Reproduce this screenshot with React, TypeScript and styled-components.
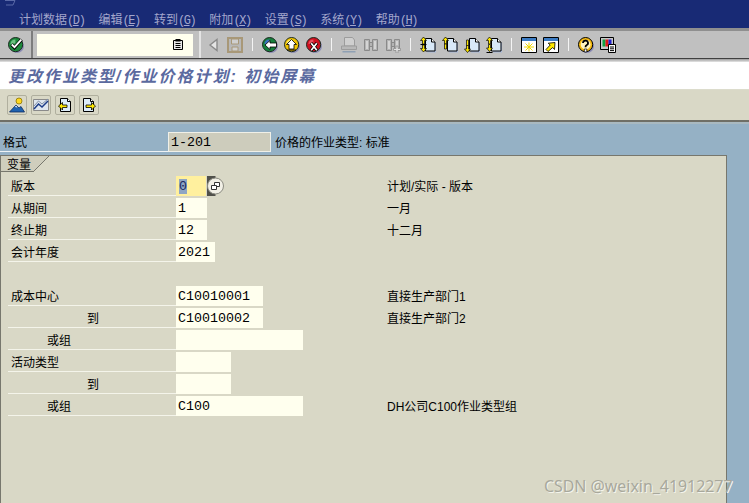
import React from "react";
import styled, { createGlobalStyle } from "styled-components";

const CJK = `"Liberation Sans", "Noto Sans CJK SC", sans-serif`;
const MONO = `"Liberation Mono", "Noto Sans CJK SC", monospace`;

const Global = createGlobalStyle`
  html, body { margin: 0; padding: 0; background: #95b1c5; }
  body { width: 749px; height: 503px; overflow: hidden; font: 12px ${CJK}; color: #000; }
`;

const Page = styled.div`
  position: relative;
  width: 749px;
  height: 503px;
  overflow: hidden;
  display: flex;
  flex-direction: column;
`;

const MenuBar = styled.div`
  height: 28px;
  box-sizing: border-box;
  background: #182a75;
  display: flex;
  gap: 14px;
  padding: 12px 0 0 19px;
  position: relative;
  color: #a3a6cc;
  font-size: 12px;
  line-height: 16px;
`;
const MenuItem = styled.span`
  white-space: nowrap;
`;
const Hotkey = styled.span`
  font-family: ${MONO};
  letter-spacing: -1.4px;
  & u { text-underline-offset: 1px; }
`;
const CornerMark = styled.svg`
  position: absolute;
  left: 4px;
  top: 0;
`;

const Toolbar = styled.div`
  height: 31px;
  box-sizing: border-box;
  background: #c0c0c0;
  border-top: 3px solid #8f8f8f;
  border-bottom: 1px solid #404040;
  display: flex;
  align-items: center;
`;
const OkCell = styled.div`
  width: 33px;
  height: 100%;
  box-sizing: border-box;
  border-right: 2px solid #7d7d7d;
  padding-left: 8px;
  display: flex;
  align-items: center;
`;
const CommandField = styled.div`
  width: 156px;
  height: 22px;
  margin: 0 6px 0 4px;
  background: #ffffee;
  display: flex;
  align-items: center;
  justify-content: flex-end;
  padding-right: 5px;
  box-sizing: border-box;
`;
const CellEdge = styled.div`
  width: 2px;
  height: 100%;
  background: #e4e4e4;
  margin-right: 4px;
`;
const Tools = styled.div`
  display: flex;
  align-items: center;
  gap: 6px;
`;
const Sep = styled.div`
  width: 1px;
  height: 13px;
  margin: 0 3px;
  background: #f4f4f4;
`;
const Shade = styled.div`
  height: 3px;
  background: linear-gradient(#9a9a9a, #e6e6e6);
`;

const TitleBar = styled.div`
  height: 27px;
  box-sizing: border-box;
  background: #fff;
  padding: 0 0 2px 8px;
  display: flex;
  align-items: center;
`;
const TitleRule = styled.div`
  height: 1px;
  background: #dcdccc;
`;
const Title = styled.div`
  font: italic bold 16px ${CJK};
  letter-spacing: 2px;
  color: #5b6a9f;
  white-space: nowrap;
`;

const AppBar = styled.div`
  height: 30px;
  box-sizing: border-box;
  background: #d9d8c6;
  display: flex;
  align-items: center;
  gap: 4px;
  padding: 0 0 0 7px;
`;
const AppButton = styled.div`
  width: 20px;
  height: 20px;
  box-sizing: border-box;
  border: 1px solid #b0af9e;
  border-radius: 2px;
  background: #d9d8c6;
  display: flex;
  align-items: center;
  justify-content: center;
`;

const Blue = styled.div`
  flex: 1;
  background: #95b1c5;
  border-top: 2px solid #6f6f66;
  display: flex;
  flex-direction: column;
  min-height: 0;
`;
const Fade = styled.div`
  height: 2px;
  background: #a9b9c0;
`;
const HeaderRow = styled.div`
  height: 31px;
  display: flex;
  align-items: flex-end;
  flex: none;
`;
const HeaderLabel = styled.div`
  width: 168px;
  box-sizing: border-box;
  padding-left: 3px;
  height: 20px;
  line-height: 22px;
  border-bottom: 1px solid #eef2f4;
  margin-bottom: 3px;
`;
const HeaderValue = styled.div`
  width: 103px;
  height: 20px;
  box-sizing: border-box;
  margin-bottom: 3px;
  background: #cdccbc;
  border: 1px solid #f0f0e8;
  font: 13.33px/20px ${MONO};
  padding-left: 2px;
`;
const HeaderText = styled.div`
  margin: 0 0 3px 4px;
  height: 20px;
  line-height: 22px;
  white-space: nowrap;
`;

const Panel = styled.div`
  flex: 1;
  width: 727px;
  box-sizing: border-box;
  background: #d9d8c6;
  border-top: 1px solid #77776d;
  border-left: 1px solid #77776d;
  border-right: 1px solid #77776d;
  min-height: 0;
`;
const TabStrip = styled.div`
  height: 16px;
  display: flex;
  margin-bottom: 2px;
`;
const Tab = styled.div`
  width: 32px;
  height: 16px;
  box-sizing: border-box;
  background: #cfcebd;
  border-bottom: 1px solid #77776d;
  padding-left: 6px;
  line-height: 18px;
`;
const TabSlant = styled.svg`
  display: block;
`;
const FormRows = styled.div`
  display: flex;
  flex-direction: column;
  padding-left: 7px;
`;
const Row = styled.div`
  height: 22px;
  display: flex;
  align-items: flex-end;
`;
const Label = styled.div<{ $indent: number }>`
  width: 168px;
  height: 21px;
  box-sizing: border-box;
  border-bottom: 1px solid #f4f4ea;
  padding-left: ${(p) => p.$indent}px;
  line-height: 25px;
  white-space: nowrap;
`;
const FieldCell = styled.div`
  width: 211px;
  height: 100%;
  display: flex;
  align-items: flex-end;
`;
const Field = styled.div<{ $width: number; $focus?: boolean }>`
  width: ${(p) => p.$width}px;
  height: 20px;
  box-sizing: border-box;
  padding-left: ${(p) => (p.$focus ? 3 : 2)}px;
  background: ${(p) => (p.$focus ? "#fff09e" : "#ffffee")};
  font: 13.33px/21px ${MONO};
`;
const Selected = styled.span`
  background: #8fa6c4;
  color: #1a2a60;
`;
const PickerButton = styled.svg`
  display: block;
  margin-left: 1px;
`;
const Description = styled.div`
  line-height: 25px;
  height: 21px;
  white-space: nowrap;
`;
const Watermark = styled.div`
  position: absolute;
  left: 544px;
  top: 475px;
  font: 15.9px "Noto Sans", "DejaVu Sans", sans-serif;
  color: #a8a89c;
  text-shadow: 1px 1px 0 #f4f4ec;
  white-space: nowrap;
`;

const Ico = ({ children }: { children: React.ReactNode }) => (
  <svg width="16" height="16" viewBox="0 0 16 16" style={{ display: "block", flex: "none" }}>
    {children}
  </svg>
);

const Ball = ({ fill, hi }: { fill: string; hi: string }) => (
  <>
    <circle cx="9" cy="9" r="7" fill="#8c8cb4" />
    <circle cx="7.6" cy="7.6" r="7.1" fill={fill} stroke="#1c2a20" strokeWidth="1" />
    <path d="M2.4 7a5 5 0 0 1 5-4.6v4z" fill={hi} />
  </>
);

const Page1 = () => (
  <>
    <path d="M7 3h5.500l3.500 3v9.500H7z" fill="#a8b8d8" />
    <path d="M5.500 1.500h6l3.500 3.500v9H5.500z" fill="#d8e8f8" stroke="#000" strokeWidth="1" />
    <path d="M11.500 1.500v3.500H15" fill="#fff" stroke="#000" strokeWidth="1" />
  </>
);
const UpArrow = ({ x, y }: { x: number; y: number }) => (
  <path transform={`translate(${x} ${y})`} d="M3 0l3 3.500H4V7H2V3.500H0z" fill="#ffe800" stroke="#000" strokeWidth=".7" />
);
const DownArrow = ({ x, y }: { x: number; y: number }) => (
  <path transform={`translate(${x} ${y})`} d="M3 7l3-3.500H4V0H2v3.500H0z" fill="#ffe800" stroke="#000" strokeWidth=".7" />
);
const Gray = "#9c9c9c";

const Binocular = () => (
  <>
    <path d="M1.500 2.500h5v11h-5zM9.500 2.500h5v11h-5zM6.500 5.500h3v4h-3z" fill="#b4b4b4" stroke="#8a8a8a" />
    <path d="M3 4h2v8H3zM11 4h2v8h-2z" fill="#d4d4d4" />
  </>
);

const icons: Record<string, React.ReactNode> = {
  ok: (
    <>
      <Ball fill="#1c8a3c" hi="#6cc080" />
      <path d="M3.500 7.500l3 3 7-8" fill="none" stroke="#000" strokeWidth="3.400" />
      <path d="M3.800 7.500l2.700 2.700 6.800-7.600" fill="none" stroke="#fff" strokeWidth="1.800" />
    </>
  ),
  back: (
    <>
      <Ball fill="#16803c" hi="#3a70c0" />
      <path d="M3 8l5-4.500V6h6.500v4H8v2.500z" fill="#fff" stroke="#000" strokeWidth=".8" />
    </>
  ),
  up: (
    <>
      <Ball fill="#f2c400" hi="#fff070" />
      <path d="M7.500 2.500l5 5H10v4.500H5V7.500H2.500z" fill="#fff" stroke="#000" strokeWidth=".8" />
      <path d="M3 13h9" stroke="#000" strokeWidth="1" />
    </>
  ),
  cancel: (
    <>
      <Ball fill="#d01020" hi="#e85060" />
      <path d="M5 6l6 7.500M11 6l-6 7.500" stroke="#000" strokeWidth="3.200" />
      <path d="M5.200 6.200l5.600 7M10.800 6.200l-5.600 7" stroke="#fff" strokeWidth="1.700" />
    </>
  ),
  prev: <path d="M12 2.500v11l-7-5.500z" fill="#e4e4e4" stroke="#8a8a8a" strokeWidth="1.400" />,
  save: (
    <>
      <path d="M1 1h14v14H1z" fill="#b8b8b8" stroke="#a89878" strokeWidth="2" />
      <path d="M4.500 2h7v5h-7zM5 10h6v4H5z" fill="#cfcfcf" stroke="#a89878" />
    </>
  ),
  print: (
    <>
      <path d="M3.500 .5h8l2 2.500v6H3.500z" fill="#cfcfcf" stroke={Gray} />
      <path d="M.5 9h15v3.500H.5z" fill="#b8b8b8" stroke={Gray} />
      <path d="M1.500 14h13v1.500h-13z" fill="#8fa0b4" />
    </>
  ),
  find: <Binocular />,
  findNext: (
    <>
      <Binocular />
      <path d="M11 9h2v2.500h2.500v2H13V16h-2v-2.500H8.500v-2H11z" fill="#e0e0e0" stroke="#8a8a8a" strokeWidth=".7" />
    </>
  ),
  first: (
    <>
      <Page1 />
      <UpArrow x={.5} y={0} />
      <DownArrow x={.5} y={8} />
      <path d="M.5 7.500h6" stroke="#000" />
    </>
  ),
  pgUp: (
    <>
      <Page1 />
      <UpArrow x={.5} y={0} />
      <path d="M2.500 7h2v5h-2z" fill="#ffe800" stroke="#000" strokeWidth=".7" />
    </>
  ),
  pgDown: (
    <>
      <Page1 />
      <path d="M2.500 3h2v6h-2z" fill="#ffe800" stroke="#000" strokeWidth=".7" />
      <DownArrow x={.5} y={8.500} />
    </>
  ),
  last: (
    <>
      <Page1 />
      <UpArrow x={.5} y={0} />
      <DownArrow x={.5} y={7.500} />
      <path d="M.5 15.500h6" stroke="#000" />
    </>
  ),
  newWin: (
    <>
      <path d="M.5.500h15v15H.5z" fill="#fff" stroke="#000" />
      <path d="M1 1h14v3H1z" fill="#3c7cc4" />
      <path d="M8 5.500v9M3 10h10M4.500 6.500l7 7M11.500 6.500l-7 7" stroke="#f0d800" strokeWidth="1" />
    </>
  ),
  shortcut: (
    <>
      <path d="M.5.500h15v15H.5z" fill="#fff" stroke="#000" />
      <path d="M1 1h14v3H1z" fill="#3c7cc4" />
      <path d="M12 5.500l-.5 7-1.800-2-4.700 4-2-2 4.200-4.500-2-1.800z" fill="#ffe800" stroke="#000" strokeWidth=".8" />
    </>
  ),
  help: (
    <>
      <circle cx="9" cy="9" r="7" fill="#8c8cb4" />
      <circle cx="7.600" cy="7.600" r="7.100" fill="#f8bc10" stroke="#000" />
      <circle cx="7.600" cy="7.600" r="4.900" fill="#fff4c0" />
      <path d="M5 6a2.500 2.500 0 1 1 3.500 2.300q-1 .5-1 2" fill="none" stroke="#000" strokeWidth="1.800" />
      <path d="M6.300 12h2.500v3H6.300z" fill="#fff" stroke="#000" strokeWidth=".7" />
    </>
  ),
  layout: (
    <>
      <path d="M.5.500h13v12H.5z" fill="#c8c8c8" stroke="#000" />
      <path d="M2.500 2.500h3v7h-3z" fill="#10a040" />
      <path d="M5.500 2.500h3v7h-3z" fill="#e01818" />
      <path d="M8.500 2.500h3v7h-3z" fill="#2020d0" />
      <path d="M8.500 7.500h7v8h-7z" fill="#fff" stroke="#000" />
      <path d="M10 10h4M10 11.800h4M10 13.600h4" stroke="#000" />
    </>
  ),
  person: (
    <>
      <circle cx="10" cy="4" r="3" fill="#ffd820" stroke="#8a7400" strokeWidth=".8" />
      <path d="M.5 15L7 8l3 3 2-1.500L15.500 15z" fill="#1f62b0" stroke="#0c2c60" strokeWidth=".8" />
      <path d="M6 10l1-1.500 1.500 2z" fill="#fff" />
    </>
  ),
  chart: (
    <>
      <path d="M.5 2.500h15v11H.5z" fill="#dfe6ee" stroke="#8a8a8a" />
      <path d="M1 12l4.500-5 3.500 3 6-6" fill="none" stroke="#1c3c88" strokeWidth="1.500" />
      <path d="M1 9l4.500-5 3.500 3 6-5" fill="none" stroke="#8090a8" strokeWidth="1" />
    </>
  ),
  pageIn: (
    <>
      <path d="M3.500 1.500h7l3 3v10h-10z" fill="#dcecf8" stroke="#000" />
      <path d="M10.500 1.500v3h3" fill="#fff" stroke="#000" />
      <path d="M1.500 9l4-3.500V8H10v2.500H5.500V13z" fill="#ffe800" stroke="#000" strokeWidth=".8" />
    </>
  ),
  pageOut: (
    <>
      <path d="M2.500 1.500h7l3 3v10h-10z" fill="#dcecf8" stroke="#000" />
      <path d="M9.500 1.500v3h3" fill="#fff" stroke="#000" />
      <path d="M14.500 9l-4-3.500V8H5v2.500h5.500V13z" fill="#ffe800" stroke="#000" strokeWidth=".8" />
    </>
  ),
  clipboard: (
    <>
      <path d="M1.500 3.500h9v9h-9z" fill="#e8e8e8" stroke="#000" />
      <path d="M3.500 2h5v2.500h-5z" fill="#000" />
      <path d="M3.500 6.500h5M3.500 8.500h5M3.500 10.500h5" stroke="#000" />
    </>
  ),
};

type Tool = string | null;
const toolList: Tool[] = [
  "prev", "save", null, "back", "up", "cancel", null, "print", "find", "findNext", null,
  "first", "pgUp", "pgDown", "last", null, "newWin", "shortcut", null, "help", "layout",
];

const menus: [string, string][] = [
  ["计划数据", "D"], ["编辑", "E"], ["转到", "G"], ["附加", "X"], ["设置", "S"], ["系统", "Y"], ["帮助", "H"],
];

type RowData = { label?: string; indent?: number; width?: number; value?: string; desc?: string; focus?: boolean };
const rows: RowData[] = [
  { label: "版本", indent: 3, width: 30, value: "0", desc: "计划/实际 - 版本", focus: true },
  { label: "从期间", indent: 3, width: 31, value: "1", desc: "一月" },
  { label: "终止期", indent: 3, width: 31, value: "12", desc: "十二月" },
  { label: "会计年度", indent: 3, width: 39, value: "2021" },
  {},
  { label: "成本中心", indent: 3, width: 87, value: "C10010001", desc: "直接生产部门1" },
  { label: "到", indent: 79, width: 87, value: "C10010002", desc: "直接生产部门2" },
  { label: "或组", indent: 39, width: 127 },
  { label: "活动类型", indent: 3, width: 55 },
  { label: "到", indent: 79, width: 55 },
  { label: "或组", indent: 39, width: 127, value: "C100", desc: "DH公司C100作业类型组" },
];

export default function App() {
  return (
    <Page>
      <Global />
      <MenuBar>
        <CornerMark width="12" height="6" viewBox="0 0 12 6">
          <path d="M1 .5h10L9 5H2" fill="none" stroke="#5a6aa8" />
        </CornerMark>
        {menus.map(([t, k]) => (
          <MenuItem key={k}>
            {t}
            <Hotkey>
              (<u>{k}</u>)
            </Hotkey>
          </MenuItem>
        ))}
      </MenuBar>
      <Toolbar>
        <OkCell>
          <Ico>{icons.ok}</Ico>
        </OkCell>
        <CommandField>
          <Ico>{icons.clipboard}</Ico>
        </CommandField>
        <CellEdge />
        <Tools>
          {toolList.map((t, i) => (t ? <Ico key={i}>{icons[t]}</Ico> : <Sep key={i} />))}
        </Tools>
      </Toolbar>
      <Shade />
      <TitleBar>
        <Title>更改作业类型/作业价格计划: 初始屏幕</Title>
      </TitleBar>
      <TitleRule />
      <AppBar>
        {["person", "chart", "pageIn", "pageOut"].map((n) => (
          <AppButton key={n}>
            <Ico>{icons[n]}</Ico>
          </AppButton>
        ))}
      </AppBar>
      <Blue>
        <Fade />
        <HeaderRow>
          <HeaderLabel>格式</HeaderLabel>
          <HeaderValue>1-201</HeaderValue>
          <HeaderText>价格的作业类型: 标准</HeaderText>
        </HeaderRow>
        <Panel>
          <TabStrip>
            <Tab>变量</Tab>
            <TabSlant width="16" height="16" viewBox="0 0 16 16">
              <path d="M0 16L16 0H0z" fill="#cfcebd" />
              <path d="M0 16L16 0" stroke="#77776d" fill="none" />
            </TabSlant>
          </TabStrip>
          <FormRows>
            {rows.map((r, i) => (
              <Row key={i}>
                {r.label && <Label $indent={r.indent ?? 0}>{r.label}</Label>}
                {r.label && (
                  <FieldCell>
                    <Field $width={r.width ?? 0} $focus={r.focus}>
                      {r.focus ? <Selected>{r.value}</Selected> : r.value}
                    </Field>
                    {r.focus && (
                      <PickerButton width="17" height="20" viewBox="0 0 17 20">
                        <path d="M0 0h8.500v20H0z" fill="#50504a" />
                        <circle cx="8.500" cy="10" r="8" fill="#f2f0e6" stroke="#8a8a80" />
                        <path d="M7.500 6.500h5v4h-5z" fill="#fff" stroke="#333" />
                        <path d="M4.500 9.500h5v4h-5z" fill="#fff" stroke="#333" />
                      </PickerButton>
                    )}
                  </FieldCell>
                )}
                {r.desc && <Description>{r.desc}</Description>}
              </Row>
            ))}
          </FormRows>
        </Panel>
      </Blue>
      <Watermark>CSDN @weixin_41912277</Watermark>
    </Page>
  );
}
